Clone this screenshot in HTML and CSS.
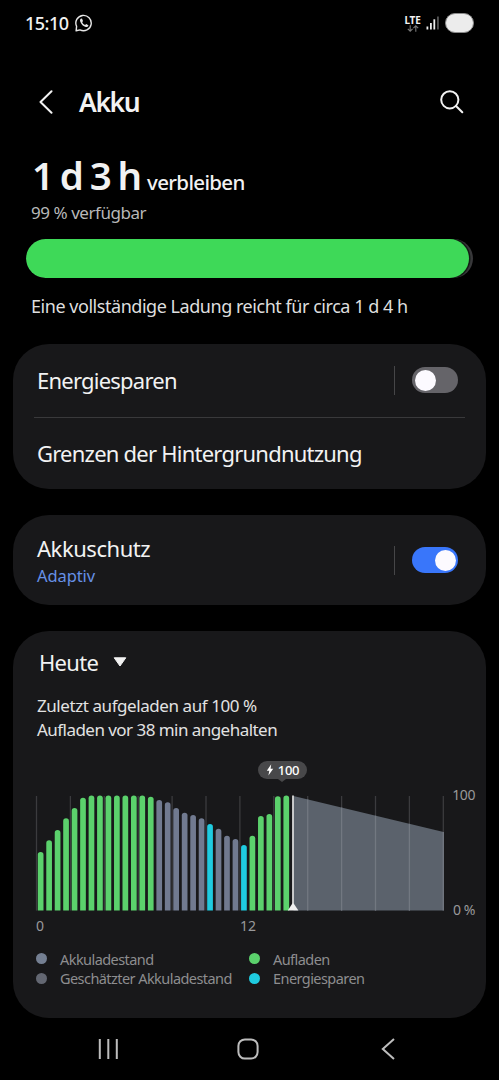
FILE: index.html
```html
<!DOCTYPE html>
<html lang="de">
<head>
  <meta charset="UTF-8">
  <meta name="viewport" content="width=device-width, initial-scale=1.0">
  <title>Akku</title>
  <link rel="stylesheet" href="styles.css">
</head>
<body>
  <!-- Status bar -->
  <div class="status-bar">
    <span class="clock">15:10</span>
    <svg class="whatsapp" width="18" height="18" viewBox="0 0 18 18" fill="none">
      <path d="M1.1 16.8 L1.6 12.4 A7.7 7.7 0 1 1 5 15.9 Z" stroke="#e6e6e6" stroke-width="1.4" stroke-linejoin="round"/>
      <path d="M6.2 4.6 C5.1 5 4.7 6.3 5.3 7.8 C6.3 10.5 8.3 12.4 10.8 13 C12.2 13.3 13.4 12.5 13.4 11.3 L11.2 10 L10.1 11 C8.8 10.5 7.7 9.4 7.2 8.2 L8 7.1 L7.1 4.8 Z" fill="#e6e6e6"/>
    </svg>
    <div class="network">
      <span class="lte">LTE</span>
      <svg width="12" height="7" viewBox="0 0 12 7" fill="none" stroke="#777" stroke-width="1.1">
        <path d="M3.2 0.2V6M0.8 3.8L3.2 6.2L5.6 3.8M8.8 6.8V1M6.4 3.2L8.8 0.8L11.2 3.2"/>
      </svg>
    </div>
    <svg class="signal" width="14" height="14" viewBox="0 0 14 14">
      <rect x="0.5" y="10.5" width="1.8" height="3" fill="#eee"/>
      <rect x="4" y="7" width="1.8" height="6.5" fill="#eee"/>
      <rect x="7.4" y="3.3" width="1.8" height="10.2" fill="#eee"/>
      <rect x="11.2" y="0.5" width="1.5" height="13" fill="#666"/>
    </svg>
    <span class="battery-pill"></span>
  </div>

  <!-- Title bar -->
  <div class="title-bar">
    <svg class="back" width="14" height="25" viewBox="0 0 14 25" fill="none" stroke="#f2f2f2" stroke-width="2" stroke-linecap="round" stroke-linejoin="round">
      <path d="M12.5 1.2L1.5 12L12.5 22.8"/>
    </svg>
    <h1>Akku</h1>
    <svg class="search" width="24" height="24" viewBox="0 0 24 24" fill="none" stroke="#f2f2f2" stroke-width="2" stroke-linecap="round">
      <circle cx="9.8" cy="9.8" r="8.6"/>
      <path d="M16 16L22.3 22.3"/>
    </svg>
  </div>

  <!-- Battery summary -->
  <div class="summary">
    <div class="remaining"><span class="time">1 d 3 h</span><span class="remaining-label">verbleiben</span></div>
    <div class="available">99 % verfügbar</div>
    <div class="level"><div class="level-fill"></div></div>
    <div class="full-charge">Eine vollständige Ladung reicht für circa 1 d 4 h</div>
  </div>

  <!-- Power saving -->
  <div class="card card-saving">
    <div class="row row-saving">
      <span class="label">Energiesparen</span>
      <span class="separator"></span>
      <span class="toggle"><span class="knob"></span></span>
    </div>
    <div class="row row-limits">
      <span class="label">Grenzen der Hintergrundnutzung</span>
    </div>
  </div>

  <!-- Battery protection -->
  <div class="card card-protect">
    <div class="protect-text">
      <span class="label protect">Akkuschutz</span>
      <span class="sub">Adaptiv</span>
    </div>
    <span class="separator"></span>
    <span class="toggle on"><span class="knob"></span></span>
  </div>

  <!-- Usage history -->
  <div class="card card-usage">
    <div class="day">
      <span class="label today">Heute</span>
      <svg width="14" height="10" viewBox="0 0 14 10"><path d="M1.2 0.8H12.8L7 9Z" fill="#f2f2f2" stroke="#f2f2f2" stroke-linejoin="round"/></svg>
    </div>
    <div class="last-charge">
      <div>Zuletzt aufgeladen auf 100 %</div>
      <div class="stopped">Aufladen vor 38 min angehalten</div>
    </div>

    <div class="chart">
      <div class="bubble-row">
        <div class="bubble">
          <svg width="8" height="12" viewBox="0 0 8 12"><path d="M5.2 0.3L0.8 6.7H3.3L2.4 11.6L7.2 4.8H4.6Z" fill="#fff"/></svg>
          <span>100</span>
        </div>
      </div>
      <div class="plot-row">
        <svg class="plot" width="410" height="118" viewBox="35 794 410 118">
          <g id="grid"></g>
          <path d="M293.5 796L443.6 832V910.6H293.5Z" fill="#5b626c"/>
          <g id="grid-estimate"></g>
          <g id="bars"></g>
          <path d="M293 795.5V910" stroke="#f0f0f0" stroke-width="1.6"/>
          <path d="M287.8 910.6L292 904Q293 902.6 294 904L298.4 910.6Z" fill="#f0f0f0"/>
        </svg>
        <div class="y-axis"><span>100</span><span>0 %</span></div>
      </div>
      <div class="x-axis"><span>0</span><span>12</span></div>
    </div>

    <div class="legend">
      <span class="dot level-dot"></span><span>Akkuladestand</span>
      <span class="dot charge-dot"></span><span>Aufladen</span>
      <span class="dot estimate-dot"></span><span>Geschätzter Akkuladestand</span>
      <span class="dot saving-dot"></span><span>Energiesparen</span>
    </div>
  </div>

  <!-- Navigation bar -->
  <div class="nav-bar">
    <svg width="20" height="22" viewBox="0 0 20 22" stroke="#bdbdbd" stroke-width="2"><path d="M1.8 1V21M10.3 1V21M18.8 1V21"/></svg>
    <svg width="22" height="22" viewBox="0 0 22 22" fill="none" stroke="#bdbdbd" stroke-width="2"><rect x="1.4" y="1.4" width="19.2" height="19.2" rx="6.5"/></svg>
    <svg width="14" height="22" viewBox="0 0 14 22" fill="none" stroke="#bdbdbd" stroke-width="2"><path d="M13 1L1.8 11L13 21"/></svg>
  </div>

  <script>
    const colors = { c: "#5bd16c", n: "#717a90", s: "#1fcbe0" };

    // c = charging, n = normal use, s = power saving; value is the top of the bar
    const bars = [
      ["c", 852], ["c", 840.3], ["c", 830], ["c", 818.3], ["c", 808], ["c", 797.7],
      ["c", 795.4], ["c", 795.4], ["c", 795.4], ["c", 795.4], ["c", 795.4], ["c", 795.4],
      ["c", 795.4], ["c", 796.7], ["n", 800], ["n", 802.3], ["n", 808], ["n", 812.7],
      ["n", 815], ["n", 818.3], ["s", 824], ["n", 828.7], ["n", 835.7], ["n", 839],
      ["s", 845], ["c", 835.7], ["c", 816], ["c", 814], ["c", 796.3], ["c", 795.4]
    ];

    document.getElementById("bars").innerHTML = bars.map(([type, top], i) => {
      const x = 37.8 + i * 8.47;
      return `<path d="M${x} 910.6V${top + 2.8}a2.85 2.8 0 0 1 5.7 0V910.6Z" fill="${colors[type]}"/>`;
    }).join("");

    // One grid line every two hours
    let grid = "";
    let estimate = "";
    for (let i = 0; i <= 12; i++) {
      const x = 36.5 + i * 33.9;
      grid += `<path d="M${x} 796V910.6" stroke="#3b3b3e" stroke-width="1.3"/>`;
      if (i > 7) {
        estimate += `<path d="M${x} ${796 + (x - 293.5) * 0.24}V910.6" stroke="#727881" stroke-width="1.3"/>`;
      }
    }
    document.getElementById("grid").innerHTML = grid;
    document.getElementById("grid-estimate").innerHTML = estimate;
  </script>
</body>
</html>
```
FILE: styles.css
```css
* {
  box-sizing: border-box;
}

body {
  margin: 0;
  width: 499px;
  height: 1080px;
  overflow: hidden;
  background: #000;
  color: #f2f2f2;
  font-family: "Noto Sans", sans-serif;
  white-space: nowrap;
}

svg {
  display: block;
  flex: none;
}

/* Status bar */
.status-bar {
  display: flex;
  align-items: center;
  height: 46px;
  padding: 0 25px 0 25px;
}

.clock {
  width: 50px;
  font-size: 18px;
  font-weight: 500;
  letter-spacing: -0.5px;
}

.network {
  display: flex;
  flex-direction: column;
  align-items: center;
  width: 17px;
  margin-left: auto;
  margin-right: 5px;
}

.lte {
  font-size: 10px;
  font-weight: 700;
  letter-spacing: -0.2px;
  line-height: 10px;
}

.battery-pill {
  width: 29px;
  height: 20px;
  margin-left: 5px;
  border: 1.5px solid #8a8a8a;
  border-radius: 10px;
  background: #ececec;
}

/* Title bar */
.title-bar {
  display: flex;
  align-items: center;
  height: 112px;
  padding: 0 35px 0 39px;
}

.title-bar h1 {
  margin: 0 auto 0 26px;
  font-size: 26.5px;
  font-weight: 600;
  letter-spacing: -1.4px;
  line-height: 36px;
}

/* Battery summary */
.summary {
  height: 186px;
  padding: 0 26px;
}

.remaining {
  display: flex;
  align-items: baseline;
  gap: 7px;
  height: 42px;
  padding-left: 6px;
  line-height: 34px;
}

.time {
  font-size: 38.5px;
  font-weight: 600;
  letter-spacing: -2.1px;
}

.remaining-label {
  font-size: 20.5px;
  font-weight: 500;
  letter-spacing: -0.65px;
}

.available {
  height: 39px;
  padding-left: 5px;
  color: #b8b8b8;
  font-size: 17px;
  letter-spacing: -0.45px;
  line-height: 25px;
}

.level {
  width: 447px;
  height: 39px;
  overflow: hidden;
  border-radius: 20px;
  background: #38383a;
}

.level-fill {
  width: 99%;
  height: 39px;
  border-radius: 20px;
  background: #3ed958;
  box-shadow: 0 0 0 1.5px #141c16;
}

.full-charge {
  padding: 16px 0 0 5px;
  color: #dedede;
  font-size: 18px;
  letter-spacing: -0.46px;
  line-height: 25px;
}

/* Cards */
.card {
  width: 473px;
  margin: 0 0 26px 13px;
  border-radius: 36px;
  background: #18181a;
}

.card-saving {
  height: 145px;
}

.label {
  font-size: 22px;
  letter-spacing: -0.77px;
  line-height: 30px;
}

.row {
  display: flex;
  align-items: center;
  margin: 0 21px;
  padding-left: 3px;
}

.row-saving {
  height: 74px;
  padding-right: 7px;
  border-bottom: 1.5px solid #39393b;
}

.row-limits {
  height: 71px;
}

.row .label {
  margin-top: -2px;
}

.row .toggle {
  margin-top: -1px;
}

.separator {
  width: 1px;
  height: 29px;
  margin-left: auto;
  margin-right: 17px;
  background: #464648;
}

.toggle {
  width: 46px;
  height: 26px;
  padding: 2.5px;
  border-radius: 13px;
  background: #656469;
}

.knob {
  display: block;
  width: 21px;
  height: 21px;
  border-radius: 50%;
  background: #fcfaff;
}

.toggle.on {
  background: #3976fa;
}

.toggle.on .knob {
  margin-left: auto;
}

.card-protect {
  display: flex;
  align-items: center;
  height: 90px;
  padding: 0 28px 0 24px;
}

.protect-text {
  display: flex;
  flex-direction: column;
  padding-top: 1px;
}

.protect {
  letter-spacing: -0.45px;
}

.sub {
  color: #6690e6;
  font-size: 16.5px;
  letter-spacing: -0.1px;
  line-height: 25px;
}

/* Usage card */
.card-usage {
  height: 387px;
  margin-bottom: 0;
  padding: 16px 0 0 23px;
}

.day {
  display: flex;
  align-items: center;
  padding-left: 3px;
}

.today {
  width: 74px;
  letter-spacing: -0.7px;
}

.last-charge {
  padding: 17px 0 0 1px;
  color: #e2e2e2;
  font-size: 17px;
  letter-spacing: -0.43px;
  line-height: 23.5px;
}

.stopped {
  letter-spacing: -0.54px;
}

.bubble-row {
  padding: 20px 0 0 222px;
}

.bubble {
  position: relative;
  display: flex;
  align-items: center;
  justify-content: center;
  gap: 4px;
  width: 49px;
  height: 18px;
  border-radius: 9px;
  background: #48484a;
  color: #fff;
  font-size: 13px;
  font-weight: 500;
  letter-spacing: -0.3px;
}

.bubble::after {
  content: "";
  position: absolute;
  top: 18px;
  left: 20px;
  border: 4.5px solid transparent;
  border-top: 3.5px solid #48484a;
  border-bottom: 0;
}

.plot-row {
  display: flex;
  gap: 7px;
  margin: 15px 0 0 -1px;
}

.y-axis {
  display: flex;
  flex-direction: column;
  justify-content: space-between;
  align-items: flex-end;
  width: 23px;
  height: 135px;
  margin: -9px 0 -8px 0;
  color: #99999b;
  font-size: 14px;
  letter-spacing: -0.4px;
  line-height: 20px;
}

.x-axis {
  display: flex;
  height: 20px;
  margin-top: 4px;
  color: #99999b;
  font-size: 14px;
  line-height: 20px;
}

.x-axis span {
  width: 204px;
}

/* Legend */
.legend {
  display: grid;
  grid-template-columns: 24px 189px 24px auto;
  align-items: center;
  grid-auto-rows: 19.5px;
  margin-top: 13px;
  color: #8d8d8f;
  font-size: 14.5px;
  letter-spacing: -0.56px;
  line-height: 20px;
}

.dot {
  width: 11px;
  height: 11px;
  border-radius: 50%;
}

.level-dot {
  background: #747f92;
}

.charge-dot {
  background: #5bd16c;
}

.estimate-dot {
  background: #636772;
}

.saving-dot {
  background: #1fcbe0;
}

/* Navigation bar */
.nav-bar {
  display: flex;
  align-items: center;
  height: 62px;
  padding-left: 98px;
  gap: 119px;
}

.nav-bar svg:last-child {
  margin-left: 3px;
}
```
